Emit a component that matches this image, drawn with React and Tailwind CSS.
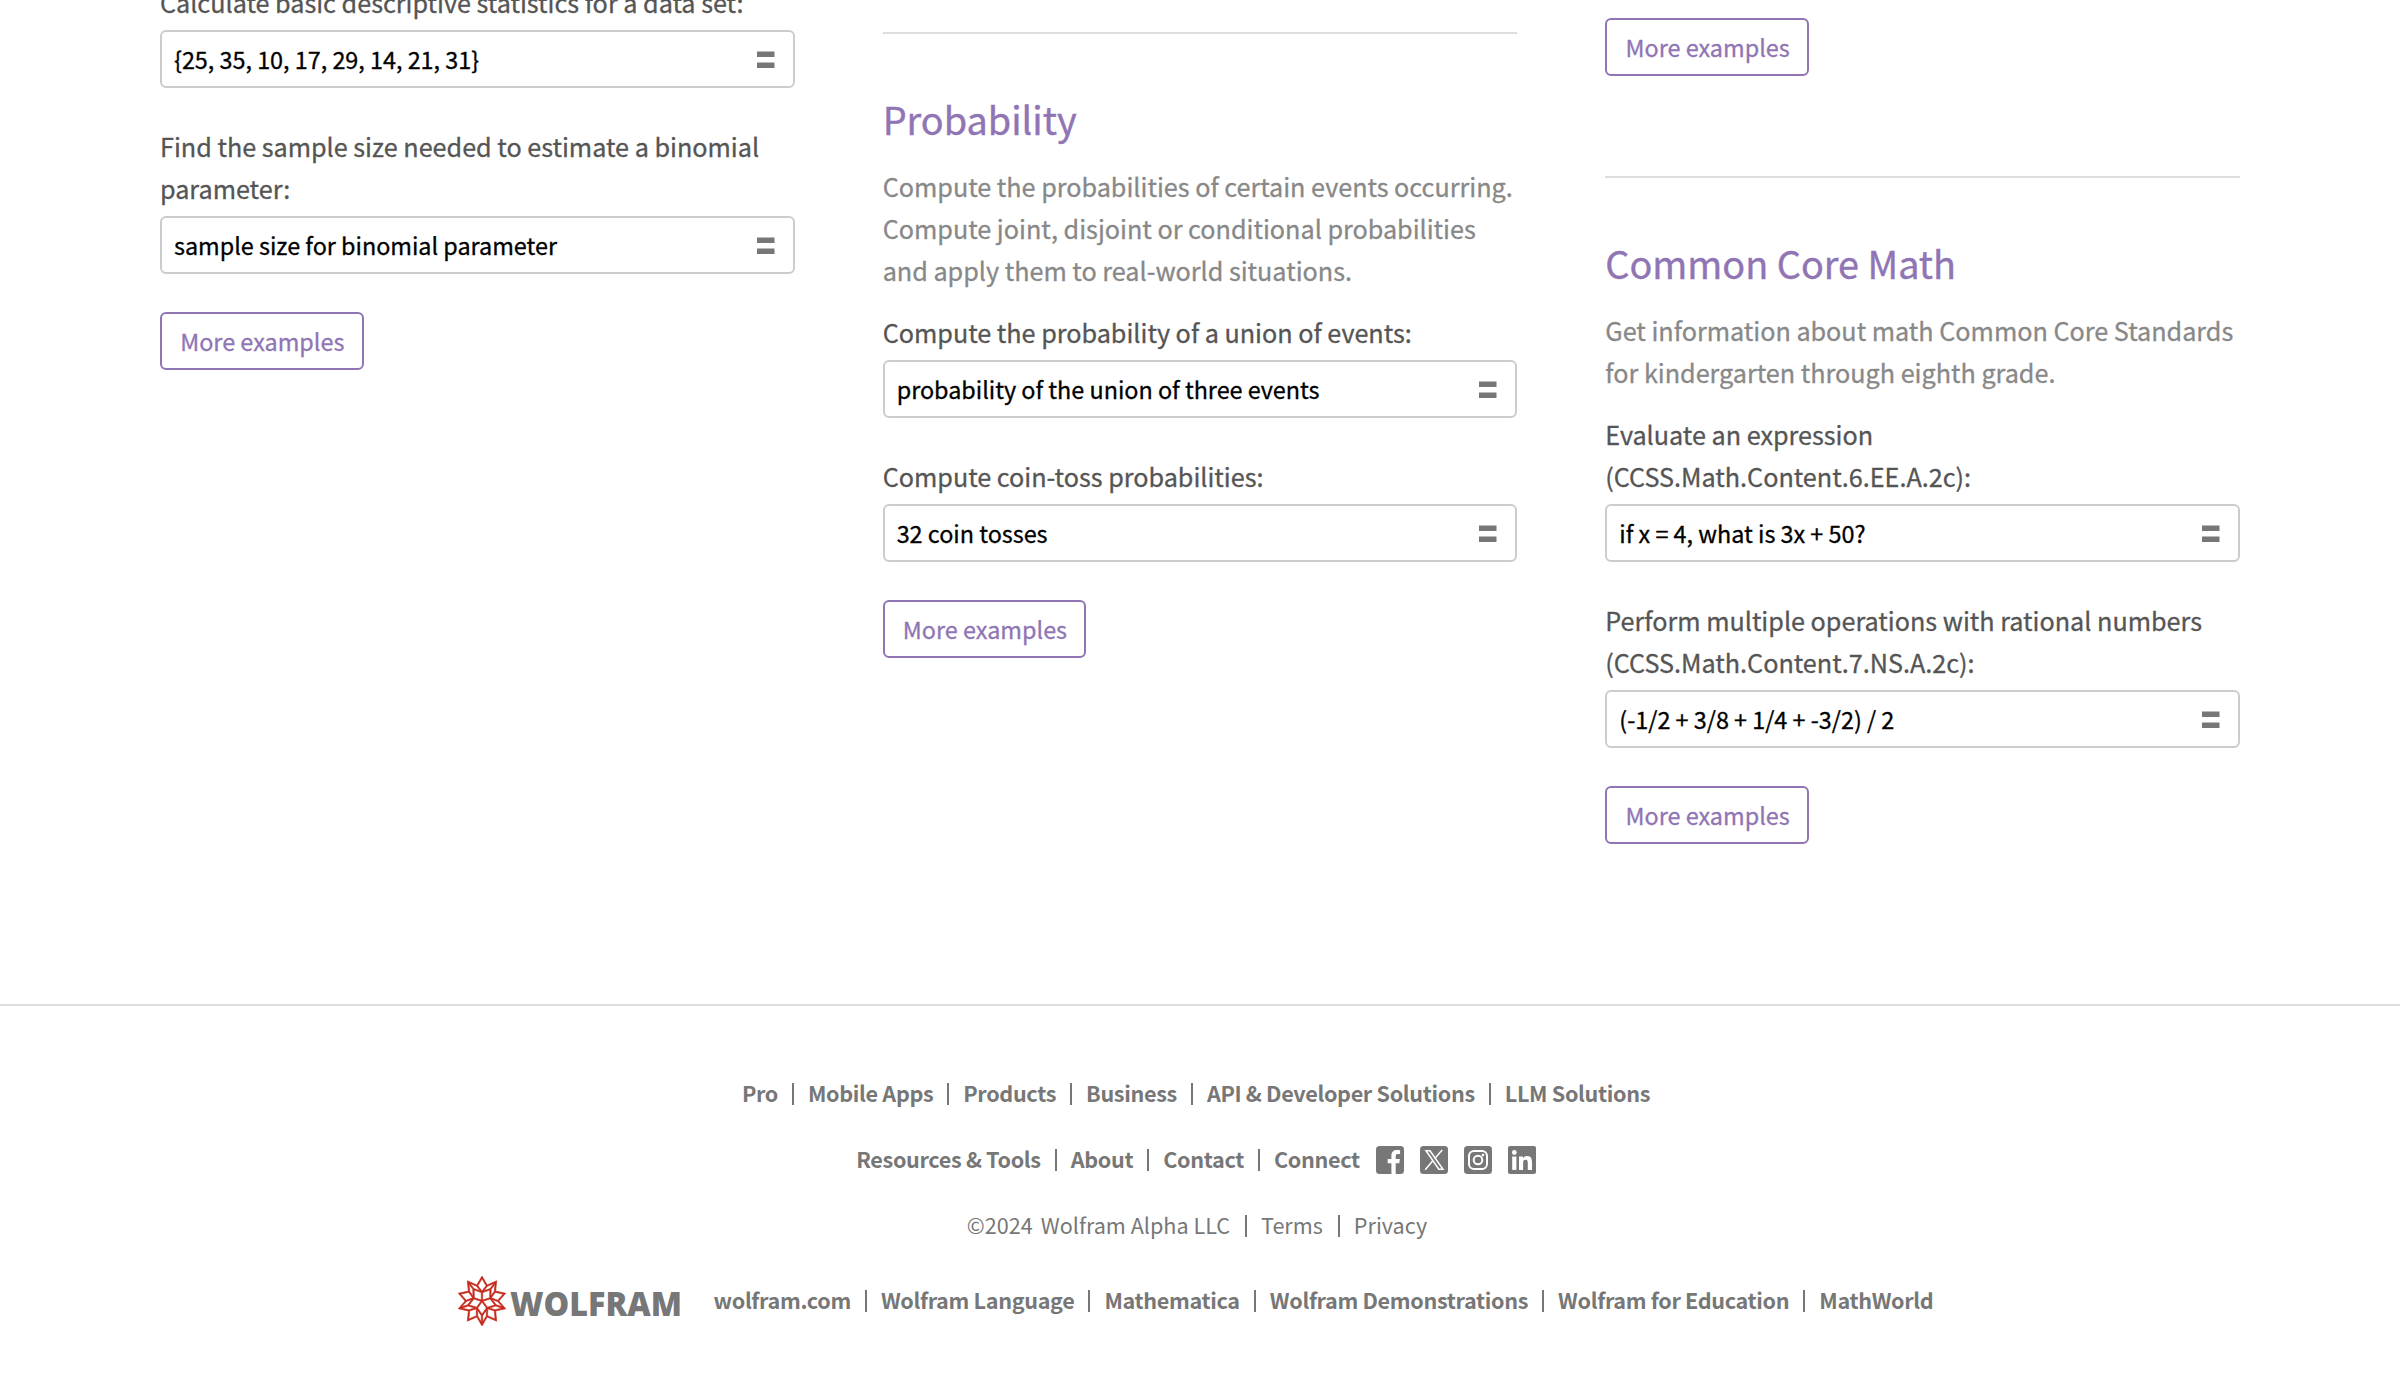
import React from "react";
import { SiWolfram } from "react-icons/si";

const LABEL = "text-[25.2px] leading-[42px] [-webkit-text-stroke:0.3px] whitespace-nowrap tracking-[-0.01px]";

function Equals() {
  return (
    <svg width="18" height="18" viewBox="0 0 18 18" className="mt-0.5 mr-[18px] shrink-0" fill="#777777">
      <rect x="0" y="0.5" width="17.5" height="5.5" />
      <rect x="0" y="11.5" width="17.5" height="5.5" />
    </svg>
  );
}

function Example({ label, query, className = "" }) {
  return (
    <div className={className}>
      <p className={LABEL + " mb-[7px] pt-px text-[#555555]"}>{label}</p>
      <div className="flex h-[58px] items-center justify-between rounded-md border-2 border-[#cccccc] bg-white pl-3">
        <span className="text-[23.4px] leading-[34px] tracking-[-0.02px] whitespace-nowrap text-black [-webkit-text-stroke:0.3px]">
          {query}
        </span>
        <Equals />
      </div>
    </div>
  );
}

function MoreButton({ className = "" }) {
  return (
    <div className={className}>
      <button className="block h-[58px] w-[203.6px] rounded-md border-2 border-[#9075b5] pl-px text-[23.4px] leading-[34px] text-[#9075b5] [-webkit-text-stroke:0.3px]">
        More examples
      </button>
    </div>
  );
}

function Section({ title, description, children }) {
  return (
    <section className="border-t-2 border-[#dddddd] pt-[55px]">
      <h2 className="text-[37.8px] leading-[60px] text-[#9075b5] [-webkit-text-stroke:0.4px]">{title}</h2>
      <p className={LABEL + " mt-4 mb-[19px] text-[#888888]"}>{description}</p>
      {children}
    </section>
  );
}

function Row({ items, className = "", barClass = "mx-3.5" }) {
  return (
    <div className={"flex items-center " + className}>
      {items.map((text, i) => (
        <React.Fragment key={text}>
          {i > 0 && <span className={"h-[22px] w-0.5 bg-[#777777] " + barClass} />}
          <span className="pb-0.5 whitespace-pre">{text}</span>
        </React.Fragment>
      ))}
    </div>
  );
}

function SocialIcons() {
  return (
    <div className="ml-4 flex gap-4 text-[#777777]">
      <svg width="28" height="28" viewBox="0 0 28 28">
        <rect width="28" height="28" rx="3.5" fill="currentColor" />
        <path
          d="M15.4 28V17.3h-3.7v-4.2h3.7V9.9c0-3.8 2.3-5.8 5.6-5.8 1.5 0 2.6.1 3.1.2v3.7h-2.2c-1.8 0-2.2.9-2.2 2.1v3h4.2l-.6 4.2h-3.6V28z"
          fill="#fff"
        />
      </svg>
      <svg width="28" height="28" viewBox="0 0 28 28">
        <rect width="28" height="28" rx="3.5" fill="currentColor" />
        <g fill="none" stroke="#fff" strokeWidth="1.5">
          <path d="M6 4.700h4l13 18.600h-4.200z" />
          <path d="M22.200 3.900l-7.600 8.800M12.600 15.100l-7.400 8.700" />
        </g>
      </svg>
      <svg width="28" height="28" viewBox="0 0 28 28">
        <rect width="28" height="28" rx="3.5" fill="currentColor" />
        <g fill="none" stroke="#fff" strokeWidth="2">
          <rect x="5" y="5" width="18" height="18" rx="5" />
          <circle cx="14" cy="14" r="4.3" />
        </g>
        <circle cx="19" cy="9" r="1.3" fill="#fff" />
      </svg>
      <svg width="28" height="28" viewBox="0 0 28 28">
        <rect width="28" height="28" rx="2" fill="currentColor" />
        <g fill="#fff">
          <circle cx="6.3" cy="6.500" r="2.400" />
          <rect x="4.200" y="10.500" width="4.200" height="13.400" />
          <path d="M11 10.500h4v1.800c.6-1.100 2-2.200 4-2.200 4.200 0 5 2.800 5 6.400v7.400h-4.200v-6.500c0-1.600 0-3.600-2.200-3.600s-2.500 1.700-2.500 3.400v6.700H11z" />
        </g>
      </svg>
    </div>
  );
}

function WolframLogo() {
  return (
    <div className="mr-[29px] flex items-center">
      <SiWolfram className="mr-0.5 h-[50px] w-[50px] text-[#c4281a] [stroke-width:0.3px]" />
      <svg width="176" height="50" viewBox="0 0 176 50">
        <text
          x="1"
          y="40"
          textLength="172"
          lengthAdjust="spacingAndGlyphs"
          fill="#777777"
          className='font-["Open_Sans",sans-serif] text-[33px] font-extrabold'
        >
          WOLFRAM
        </text>
      </svg>
    </div>
  );
}

export default function App() {
  return (
    <div className='h-[1398px] overflow-hidden bg-white font-["Noto_Sans_CJK_SC","Open_Sans",sans-serif]'>
      <main className="grid h-[1004px] grid-cols-3 gap-x-[88px] px-40">
        <div className="-mt-5">
          <Example label="Calculate basic descriptive statistics for a data set:" query="{25, 35, 10, 17, 29, 14, 21, 31}" />
          <Example
            className="mt-9"
            label={<>Find the sample size needed to estimate a binomial<br />parameter:</>}
            query="sample size for binomial parameter"
          />
          <MoreButton className="mt-[38px]" />
        </div>
        <div className="pt-8">
          <Section
            title="Probability"
            description={<>Compute the probabilities of certain events occurring.<br />Compute joint, disjoint or conditional probabilities<br />and apply them to real-world situations.</>}
          >
            <Example label="Compute the probability of a union of events:" query="probability of the union of three events" />
            <Example className="mt-9" label="Compute coin-toss probabilities:" query="32 coin tosses" />
            <MoreButton className="mt-[38px]" />
          </Section>
        </div>
        <div className="pt-[18px]">
          <MoreButton className="mb-[100px]" />
          <Section
            title="Common Core Math"
            description={<>Get information about math Common Core Standards<br />for kindergarten through eighth grade.</>}
          >
            <Example label={<>Evaluate an expression<br />(CCSS.Math.Content.6.EE.A.2c):</>} query="if x = 4, what is 3x + 50?" />
            <Example
              className="mt-9"
              label={<>Perform multiple operations with rational numbers<br />(CCSS.Math.Content.7.NS.A.2c):</>}
              query="(-1/2 + 3/8 + 1/4 + -3/2) / 2"
            />
            <MoreButton className="mt-[38px]" />
          </Section>
        </div>
      </main>
      <footer className="flex flex-col items-center gap-[22px] border-t-2 border-[#dddddd] pt-[66px] pr-2 text-[21.6px] leading-[42px] text-[#777777]">
        <Row
          className="h-11 font-bold tracking-[-0.33px]"
          items={["Pro", "Mobile Apps", "Products", "Business", "API & Developer Solutions", "LLM Solutions"]}
        />
        <div className="flex h-11 items-center">
          <Row className="font-bold tracking-[-0.33px]" items={["Resources & Tools", "About", "Contact", "Connect"]} />
          <SocialIcons />
        </div>
        <div className="flex h-11 items-center gap-2 pl-0.5">
          <span className="pb-0.5">©2024</span>
          <Row items={["Wolfram Alpha LLC", "Terms", "Privacy"]} barClass="mr-3.5 ml-[15px]" />
        </div>
        <div className="mt-1.5 flex h-[50px] items-center pr-0.5">
          <WolframLogo />
          <Row
            className="font-bold tracking-[-0.33px]"
            items={["wolfram.com", "Wolfram Language", "Mathematica", "Wolfram Demonstrations", "Wolfram for Education", "MathWorld"]}
          />
        </div>
      </footer>
    </div>
  );
}
